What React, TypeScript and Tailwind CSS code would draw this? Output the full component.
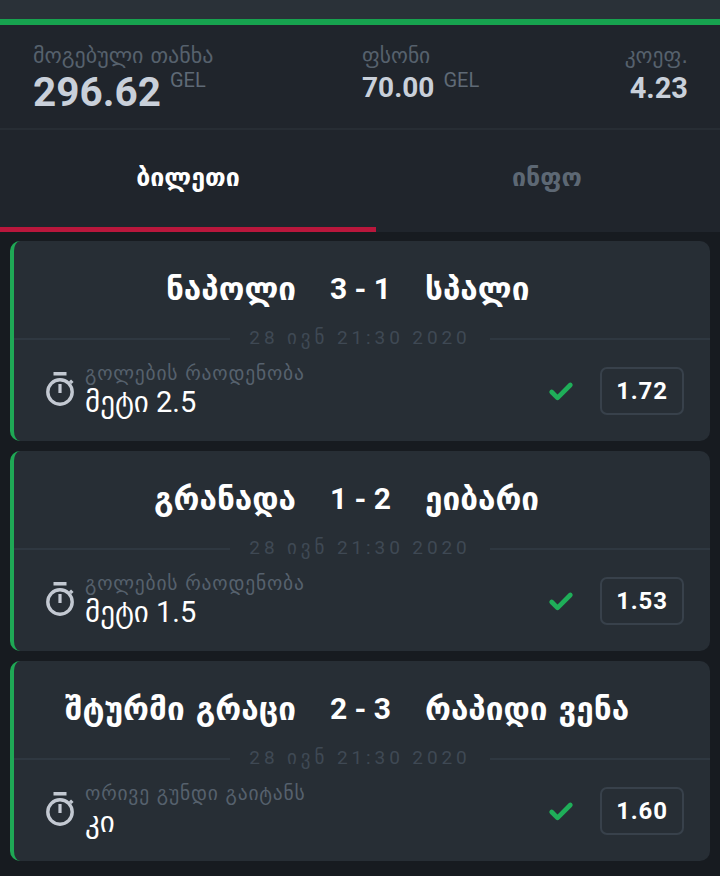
import React from 'react';
import { Check } from 'lucide-react';

interface Bet {
  home: string;
  score: string;
  away: string;
  market: string;
  pick: string;
  odds: string;
}

const bets: Bet[] = [
  { home: 'ნაპოლი', score: '3 - 1', away: 'სპალი', market: 'გოლების რაოდენობა', pick: 'მეტი 2.5', odds: '1.72' },
  { home: 'გრანადა', score: '1 - 2', away: 'ეიბარი', market: 'გოლების რაოდენობა', pick: 'მეტი 1.5', odds: '1.53' },
  { home: 'შტურმი გრაცი', score: '2 - 3', away: 'რაპიდი ვენა', market: 'ორივე გუნდი გაიტანს', pick: 'კი', odds: '1.60' },
];

const Stopwatch = () => (
  <svg width="30" height="36" viewBox="0 0 30 36" fill="none" className="shrink-0 text-[#c3c9d2]">
    <rect x="8.5" y="0" width="13" height="3.5" fill="currentColor" />
    <circle cx="15" cy="20" r="12.2" stroke="currentColor" strokeWidth="3.4" />
    <rect x="13.4" y="12" width="3.2" height="9" fill="currentColor" />
    <path d="M25 8.5l2.5 2.5" stroke="currentColor" strokeWidth="3" />
  </svg>
);

const BetCard = ({ bet }: { bet: Bet }) => (
  <div className="h-[200px] rounded-[10px] border-l-4 border-[#1fa855] bg-[#272e35] flex flex-col">
    <div className="h-[91px] pt-[28px] flex items-start text-[31.5px] leading-[40px] font-bold text-white whitespace-nowrap">
      <div className="w-[282px] text-right">{bet.home}</div>
      <div className="w-[129px] text-center font-['Roboto',sans-serif] font-bold text-[30px]">{bet.score}</div>
      <div className="w-[282px] text-left">{bet.away}</div>
    </div>
    <div className="flex items-center h-[12px] -mb-px">
      <div className="w-[216px] h-[2px] mt-[2px] bg-[#2f3841]" />
      <div className="w-[260px] text-center text-[#3f4954] text-[19px] tracking-[3.9px] whitespace-nowrap font-['Roboto','DejaVu_Sans',sans-serif]">
        28 ივნ 21:30 2020
      </div>
      <div className="flex-1 h-[2px] mt-[2px] bg-[#2f3841]" />
    </div>
    <div className="flex items-center pl-[31px] pr-[26px] pt-[19px]">
      <Stopwatch />
      <div className="ml-[10px] flex-1">
        <div className="text-[19.5px] leading-[24px] text-[#56616d] tracking-[0.8px]">{bet.market}</div>
        <div className="text-[29px] leading-[32px] text-white font-['Roboto','DejaVu_Sans',sans-serif]">{bet.pick}</div>
      </div>
      <Check className="w-[28px] h-[28px] mt-[4px] text-[#1fae59] mr-[25px]" strokeWidth={4} />
      <div className="w-[84px] h-[48px] mt-[2px] flex items-center justify-center rounded-[7px] border-2 border-[#38414b] text-white text-[24px] font-bold tracking-[0.8px] font-['Roboto',sans-serif]">
        {bet.odds}
      </div>
    </div>
  </div>
);

export default function App() {
  return (
    <div className="w-[720px] h-[876px] overflow-hidden bg-[#171b20] font-['DejaVu_Sans','Noto_Sans',sans-serif]">
      <div className="h-[19px] bg-[#2a3138]" />
      <div className="h-[6px] bg-[#17a24f]" />
      <div className="bg-[#20252c]">
        <div className="h-[105px] pl-[33px] pr-[32px] pt-[19px] flex border-b-2 border-[#272d34]">
          <div className="w-[329px]">
            <div className="text-[22px] leading-[24px] text-[#56616d]">მოგებული თანხა</div>
            <div className="flex items-start font-['Roboto',sans-serif] text-[#c9d0da]">
              <span className="text-[40.5px] leading-[48px] font-bold">296.62</span>
              <span className="ml-[9px] text-[20px] leading-[24px] text-[#5f6a76]">GEL</span>
            </div>
          </div>
          <div className="flex-1">
            <div className="text-[21.5px] leading-[24px] text-[#56616d]">ფსონი</div>
            <div className="flex items-start font-['Roboto',sans-serif] text-[#c9d0da]">
              <span className="text-[28px] leading-[40px] font-bold">70.00</span>
              <span className="ml-[9px] text-[20px] leading-[24px] text-[#5f6a76]">GEL</span>
            </div>
          </div>
          <div className="text-right">
            <div className="text-[21.5px] leading-[24px] text-[#56616d]">კოეფ.</div>
            <div className="text-[29px] leading-[40px] font-bold font-['Roboto',sans-serif] text-[#c9d0da]">4.23</div>
          </div>
        </div>
        <div className="h-[102px] relative flex text-[25px] font-bold">
          <div className="w-[376px] pt-[33px] text-center text-white leading-[30px]">ბილეთი</div>
          <div className="flex-1 pt-[33px] text-center text-[#5d6874] leading-[30px] pr-[2px]">ინფო</div>
          <div className="absolute left-0 bottom-0 w-[376px] h-[5px] bg-[#b9173c]" />
        </div>
      </div>
      <div className="px-[10px] pt-[9px] flex flex-col gap-[10px]">
        {bets.map((bet) => (
          <BetCard key={bet.home} bet={bet} />
        ))}
      </div>
    </div>
  );
}
